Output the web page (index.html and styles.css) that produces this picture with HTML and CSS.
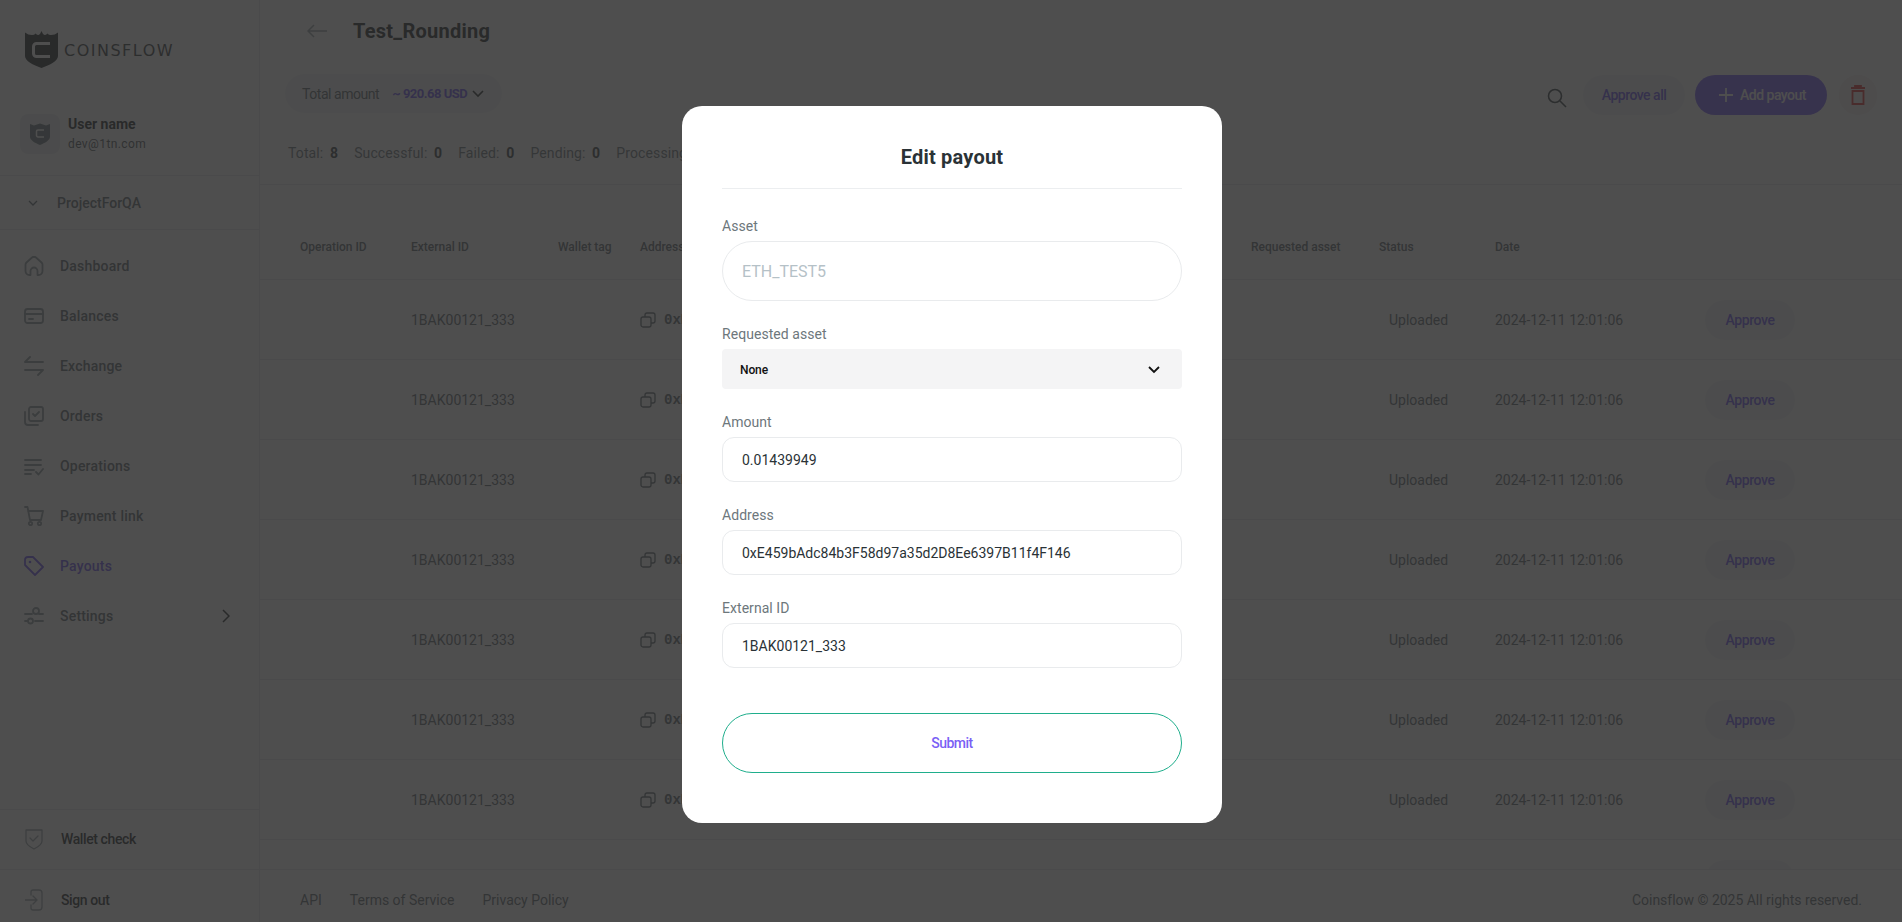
FILE: index.html
```html
<!DOCTYPE html>
<html lang="en">
<head>
<meta charset="utf-8">
<title>Coinsflow - Test_Rounding</title>
<link rel="stylesheet" href="styles.css">
</head>
<body>
<div class="app">
  <aside class="sidebar">
    <div class="logo">
      <svg class="logo-mark" viewBox="0 0 33 37"><path fill="#24292c" d="M0 1.500Q3 4 7 4q2.500 0 3.500-1.500Q12 4 13.500 4 15.500 3 16.500 0q1 3 3 4 1.500 0 3-1.500Q23.500 4 26 4q4 0 7-2.500V25c0 5-8 9-16.500 12C8 34 0 30 0 25z"/><path fill="none" stroke="#fff" stroke-width="3" d="M25 12.500H11.500a3 3 0 0 0-3 3v7a3 3 0 0 0 3 3H25"/></svg>
      <span class="logo-text">COINSFLOW</span>
    </div>
    <div class="user">
      <div class="avatar"><svg viewBox="0 0 20 22"><path fill="#6d7a80" d="M0 1l4 1.500 6-2 6 2 4-1.500v13c0 3-5 6-10 8C5 20 0 17 0 14z"/><path fill="none" stroke="#fff" stroke-width="1.500" d="M14 7H8a1.500 1.500 0 0 0-1.500 1.500v4A1.500 1.500 0 0 0 8 14h6"/></svg></div>
      <div class="user-info"><div class="user-name">User name</div><div class="user-mail">dev@1tn.com</div></div>
    </div>
    <div class="project"><svg class="project-chev" viewBox="0 0 10 6"><path d="M1 1l4 4 4-4"/></svg><span>ProjectForQA</span></div>
    <nav class="nav">
      <a class="nav-item"><svg viewBox="0 0 20 20"><path d="M1.500 8.500q0-1 1-2L8 1.500q2-1.500 4 0l5.500 5q1 1 1 2V15a4 4 0 0 1-4 4h-1v-4a3.500 3.500 0 0 0-7 0v4h-1a4 4 0 0 1-4-4z"/></svg>Dashboard</a>
      <a class="nav-item"><svg viewBox="0 0 20 20"><rect x="1" y="3" width="18" height="14" rx="2.500"/><path d="M1 8h18M5 13h4"/></svg>Balances</a>
      <a class="nav-item"><svg viewBox="0 0 20 20"><path d="M6 1L1 6h18M14 19l5-5H1"/></svg>Exchange</a>
      <a class="nav-item"><svg viewBox="0 0 20 20"><rect x="5" y="1" width="14" height="14" rx="2"/><path d="M1 6v10a3 3 0 0 0 3 3h10M9 8l2 2 4-4"/></svg>Orders</a>
      <a class="nav-item"><svg viewBox="0 0 20 20"><path d="M1 4h16M1 9h16M1 14h9M1 18h6M12 16l2.500 2.500L19 13"/></svg>Operations</a>
      <a class="nav-item"><svg viewBox="0 0 20 20"><path d="M1 1h2.500L6 14h11l2-9H4"/><circle cx="6.500" cy="17.500" r="1.700"/><circle cx="15.500" cy="17.500" r="1.700"/></svg>Payment link</a>
      <a class="nav-item is-active"><svg viewBox="0 0 20 20"><path d="M1 4a3 3 0 0 1 3-3h5l10 10-8 8L1 9z"/><circle class="dot" cx="6" cy="6" r="1.300"/></svg>Payouts</a>
      <a class="nav-item has-more"><svg viewBox="0 0 20 20"><path d="M1 8h7M15 8h4M1 15h3M11 15h8"/><circle cx="12" cy="5" r="3"/><circle cx="6.500" cy="15" r="2.500"/></svg>Settings<svg class="more" viewBox="0 0 8 14"><path d="M1 1l6 6-6 6"/></svg></a>
    </nav>
    <a class="side-foot"><svg viewBox="0 0 18 22"><path d="M1 2h16v11c0 3-4 6-8 8-4-2-8-5-8-8z"/><path d="M5 10l3 3 5-5"/></svg>Wallet check</a>
    <a class="side-foot side-foot-last"><svg viewBox="0 0 18 22"><path d="M6 6V3a2 2 0 0 1 2-2h6a3 3 0 0 1 3 3v14a3 3 0 0 1-3 3H8a2 2 0 0 1-2-2v-3M0 11h11M8 7l4 4-4 4"/></svg>Sign out</a>
  </aside>

  <main class="main">
    <header class="head">
      <svg class="back" viewBox="0 0 20 14"><path d="M20 7H1M7 1L1 7l6 6"/></svg>
      <h1 class="title">Test_Rounding</h1>
    </header>
    <div class="toolbar">
      <div class="total"><span class="total-label">Total amount</span><span class="total-value">~ 920.68 USD</span><svg viewBox="0 0 12 8"><path d="M1 1l5 5 5-5"/></svg></div>
      <div class="actions">
        <svg class="search" viewBox="0 0 20 20"><circle cx="8" cy="8" r="6.500"/><path d="M13 13l6 6"/></svg>
        <button class="btn btn-soft">Approve all</button>
        <button class="btn btn-primary"><svg viewBox="0 0 16 16"><path d="M8 1v14M1 8h14"/></svg>Add payout</button>
        <button class="btn-trash"><svg viewBox="0 0 14 20"><path d="M0 3h14M4 3V1h6v2M1.500 6h11v13h-11z"/></svg></button>
      </div>
    </div>
    <div class="counters">
      <span class="counter">Total: <b>8</b></span>
      <span class="counter">Successful: <b>0</b></span>
      <span class="counter">Failed: <b>0</b></span>
      <span class="counter">Pending: <b>0</b></span>
      <span class="counter">Processing: <b>0</b></span>
    </div>
    <section class="table">
      <div class="row row-head">
        <span>Operation ID</span><span>External ID</span><span>Wallet tag</span><span>Address</span><span>Requested asset</span><span>Status</span><span>Date</span><span></span>
      </div>
      <div class="row"><span></span><span class="cell-id">1BAK00121_333</span><span></span><span class="cell-addr"><svg viewBox="0 0 16 16"><rect x="1" y="5" width="10" height="10" rx="2"/><path d="M5 5V3a2 2 0 0 1 2-2h6a2 2 0 0 1 2 2v6a2 2 0 0 1-2 2h-2"/></svg>0xE459bAdc84b3F58d97a35d2D8Ee6397B11f4F146</span><span></span><span class="cell-status">Uploaded</span><span>2024-12-11 12:01:06</span><span class="cell-act"><button class="btn-approve">Approve</button></span></div>
      <div class="row"><span></span><span class="cell-id">1BAK00121_333</span><span></span><span class="cell-addr"><svg viewBox="0 0 16 16"><rect x="1" y="5" width="10" height="10" rx="2"/><path d="M5 5V3a2 2 0 0 1 2-2h6a2 2 0 0 1 2 2v6a2 2 0 0 1-2 2h-2"/></svg>0xE459bAdc84b3F58d97a35d2D8Ee6397B11f4F146</span><span></span><span class="cell-status">Uploaded</span><span>2024-12-11 12:01:06</span><span class="cell-act"><button class="btn-approve">Approve</button></span></div>
      <div class="row"><span></span><span class="cell-id">1BAK00121_333</span><span></span><span class="cell-addr"><svg viewBox="0 0 16 16"><rect x="1" y="5" width="10" height="10" rx="2"/><path d="M5 5V3a2 2 0 0 1 2-2h6a2 2 0 0 1 2 2v6a2 2 0 0 1-2 2h-2"/></svg>0xE459bAdc84b3F58d97a35d2D8Ee6397B11f4F146</span><span></span><span class="cell-status">Uploaded</span><span>2024-12-11 12:01:06</span><span class="cell-act"><button class="btn-approve">Approve</button></span></div>
      <div class="row"><span></span><span class="cell-id">1BAK00121_333</span><span></span><span class="cell-addr"><svg viewBox="0 0 16 16"><rect x="1" y="5" width="10" height="10" rx="2"/><path d="M5 5V3a2 2 0 0 1 2-2h6a2 2 0 0 1 2 2v6a2 2 0 0 1-2 2h-2"/></svg>0xE459bAdc84b3F58d97a35d2D8Ee6397B11f4F146</span><span></span><span class="cell-status">Uploaded</span><span>2024-12-11 12:01:06</span><span class="cell-act"><button class="btn-approve">Approve</button></span></div>
      <div class="row"><span></span><span class="cell-id">1BAK00121_333</span><span></span><span class="cell-addr"><svg viewBox="0 0 16 16"><rect x="1" y="5" width="10" height="10" rx="2"/><path d="M5 5V3a2 2 0 0 1 2-2h6a2 2 0 0 1 2 2v6a2 2 0 0 1-2 2h-2"/></svg>0xE459bAdc84b3F58d97a35d2D8Ee6397B11f4F146</span><span></span><span class="cell-status">Uploaded</span><span>2024-12-11 12:01:06</span><span class="cell-act"><button class="btn-approve">Approve</button></span></div>
      <div class="row"><span></span><span class="cell-id">1BAK00121_333</span><span></span><span class="cell-addr"><svg viewBox="0 0 16 16"><rect x="1" y="5" width="10" height="10" rx="2"/><path d="M5 5V3a2 2 0 0 1 2-2h6a2 2 0 0 1 2 2v6a2 2 0 0 1-2 2h-2"/></svg>0xE459bAdc84b3F58d97a35d2D8Ee6397B11f4F146</span><span></span><span class="cell-status">Uploaded</span><span>2024-12-11 12:01:06</span><span class="cell-act"><button class="btn-approve">Approve</button></span></div>
      <div class="row"><span></span><span class="cell-id">1BAK00121_333</span><span></span><span class="cell-addr"><svg viewBox="0 0 16 16"><rect x="1" y="5" width="10" height="10" rx="2"/><path d="M5 5V3a2 2 0 0 1 2-2h6a2 2 0 0 1 2 2v6a2 2 0 0 1-2 2h-2"/></svg>0xE459bAdc84b3F58d97a35d2D8Ee6397B11f4F146</span><span></span><span class="cell-status">Uploaded</span><span>2024-12-11 12:01:06</span><span class="cell-act"><button class="btn-approve">Approve</button></span></div>
      <div class="row"><span></span><span class="cell-id">1BAK00121_333</span><span></span><span class="cell-addr"><svg viewBox="0 0 16 16"><rect x="1" y="5" width="10" height="10" rx="2"/><path d="M5 5V3a2 2 0 0 1 2-2h6a2 2 0 0 1 2 2v6a2 2 0 0 1-2 2h-2"/></svg>0xE459bAdc84b3F58d97a35d2D8Ee6397B11f4F146</span><span></span><span class="cell-status">Uploaded</span><span>2024-12-11 12:01:06</span><span class="cell-act"><button class="btn-approve">Approve</button></span></div>
    </section>
    <footer class="foot">
      <a>API</a><a>Terms of Service</a><a>Privacy Policy</a>
      <span class="copy">Coinsflow © 2025 All rights reserved.</span>
    </footer>
  </main>
</div>

<div class="overlay">
  <form class="modal">
    <h2 class="modal-title">Edit payout</h2>
    <label class="label label-first">Asset</label>
    <div class="input input-asset">ETH_TEST5</div>
    <label class="label">Requested asset</label>
    <div class="select"><span>None</span><svg viewBox="0 0 12 8"><path d="M1 1l5 5 5-5"/></svg></div>
    <label class="label">Amount</label>
    <div class="input">0.01439949</div>
    <label class="label">Address</label>
    <div class="input">0xE459bAdc84b3F58d97a35d2D8Ee6397B11f4F146</div>
    <label class="label">External ID</label>
    <div class="input">1BAK00121_333</div>
    <button class="submit" type="button">Submit</button>
  </form>
</div>
</body>
</html>
```
FILE: styles.css
```css
* { box-sizing: border-box; }
html, body { margin: 0; height: 922px; overflow: hidden; }
body { font-family: Roboto, "Liberation Sans", sans-serif; font-size: 14px; color: #5f6a70; background: #fff; }
a { display: flex; text-decoration: none; }
button { font-family: inherit; border: 0; padding: 0; }

.app { display: flex; height: 922px; }

.sidebar { width: 260px; flex: none; display: flex; flex-direction: column; border-right: 1px solid #e6e8ea; }
.logo { height: 114px; padding: 31px 0 0 25px; display: flex; align-items: flex-start; gap: 6px; }
.logo-mark { width: 33px; height: 37px; flex: none; }
.logo-text { font-family: "DejaVu Sans", sans-serif; font-size: 16px; line-height: 39px; letter-spacing: 1.500px; color: #3a4044; }
.user { height: 61px; padding: 0 20px; display: flex; gap: 8px; }
.avatar { width: 40px; height: 40px; border-radius: 8px; background: #eceef0; display: flex; align-items: center; justify-content: center; }
.avatar svg { width: 20px; height: 22px; }
.user-name { font-size: 14px; line-height: 20px; font-weight: 700; color: #24292c; }
.user-mail { font-size: 12px; line-height: 20px; letter-spacing: .4px; color: #4f575c; }
.project { height: 55px; border-top: 1px solid #e6e8ea; border-bottom: 1px solid #e6e8ea; display: flex; align-items: center; padding-left: 28px; gap: 19px; font-weight: 500; color: #5f6a70; }
.project-chev { width: 10px; height: 6px; fill: none; stroke: #5f6a70; stroke-width: 1.300; }
.nav { padding-top: 11px; flex: 1; }
.nav-item { height: 50px; align-items: center; padding-left: 24px; gap: 16px; font-weight: 500; letter-spacing: .2px; color: #5f6a70; }
.nav-item > svg:first-child { width: 20px; height: 20px; flex: none; fill: none; stroke: #8d989e; stroke-width: 1.800; stroke-linecap: round; stroke-linejoin: round; }
.nav-item.is-active { color: #6e55f0; }
.nav-item.is-active > svg:first-child { stroke: #6e55f0; stroke-width: 1.800; }
.nav-item .dot { fill: #6e55f0; stroke: none; }
.more { width: 8px; height: 14px; margin-left: auto; margin-right: 29px; fill: none; stroke: #24292c; stroke-width: 1.500; }
.side-foot { height: 60px; border-top: 1px solid #e6e8ea; align-items: center; padding-left: 25px; padding-bottom: 2px; gap: 18px; font-weight: 500; letter-spacing: -.4px; color: #24292c; }
.side-foot-last { height: 53px; padding-top: 7px; padding-bottom: 0; }
.side-foot svg { width: 18px; height: 22px; flex: none; fill: none; stroke: #9aa4a9; stroke-width: 1.300; stroke-linecap: round; stroke-linejoin: round; }

.main { flex: 1; min-width: 0; display: flex; flex-direction: column; height: 922px; }
.head { height: 62px; display: flex; align-items: center; padding-left: 47px; gap: 26px; }
.back { width: 20px; height: 14px; fill: none; stroke: #9aa4a9; stroke-width: 1.500; }
.title { margin: 0; font-size: 20px; line-height: 28px; font-weight: 700; letter-spacing: .25px; color: #24292c; }
.toolbar { height: 53px; padding: 13px 25px 0 25px; display: flex; justify-content: space-between; align-items: flex-start; }
.total { height: 39px; width: 217px; margin-top: -1px; border-radius: 20px; background: #f3f4f5; display: flex; align-items: center; padding-left: 17px; }
.total-label { letter-spacing: -.45px; color: #5f6a70; margin-right: 13px; }
.total-value { font-size: 13px; font-weight: 700; letter-spacing: -.5px; color: #6e55f0; margin-right: 5px; }
.total svg { width: 12px; height: 8px; fill: none; stroke: #24292c; stroke-width: 1.600; }
.actions { display: flex; align-items: center; height: 40px; }
.search { width: 20px; height: 20px; margin-right: 16px; margin-top: 6px; fill: none; stroke: #3a4246; stroke-width: 1.600; }
.btn { height: 40px; border-radius: 20px; font-size: 14px; font-weight: 500; letter-spacing: -.5px; display: flex; align-items: center; justify-content: center; }
.btn-soft { width: 102px; background: #f3f4f7; color: #6e55f0; margin-right: 10px; }
.btn-primary { width: 132px; gap: 6px; padding-left: 2px; background: #7a5ff5; color: #fff; margin-right: 12px; }
.btn-primary svg { width: 16px; height: 16px; fill: none; stroke: #fff; stroke-width: 1.800; }
.btn-trash { width: 38px; height: 40px; border-radius: 19px; background: #f8f1f1; display: flex; align-items: center; justify-content: center; }
.btn-trash svg { width: 14px; height: 20px; fill: none; stroke: #e03a3a; stroke-width: 1.800; }
.counters { height: 70px; border-bottom: 1px solid #e6e8ea; padding: 28px 0 0 28px; display: flex; gap: 16px; line-height: 20px; letter-spacing: .12px; color: #6d777c; }
.counter b { margin-left: 3px; font-weight: 700; color: #3a4246; }

.table { flex: 1; min-height: 0; overflow: hidden; }
.row { display: grid; grid-template-columns: 151px 147px 82px 611px 128px 116px 212px 95px; height: 80px; align-items: center; border-bottom: 1px solid #e6e8ea; color: #5f6a70; }
.row > span:first-child { padding-left: 40px; }
.row-head { height: 95px; padding-top: 29px; font-size: 12px; font-weight: 500; color: #5f6a70; }
.row-head > span { white-space: nowrap; }
.cell-addr { display: flex; align-items: center; gap: 8px; font-family: "Liberation Mono", monospace; font-size: 14px; font-weight: 700; white-space: nowrap; overflow: hidden; }
.cell-addr svg { width: 16px; height: 16px; flex: none; fill: none; stroke: #5f6a70; stroke-width: 1.300; }
.cell-status { padding-left: 10px; }
.cell-act { margin-left: -2px; }
.btn-approve { width: 90px; height: 40px; border-radius: 20px; background: #f3f4f7; color: #6e55f0; font-size: 14px; font-weight: 500; letter-spacing: -.4px; }
.foot { height: 53px; flex: none; border-top: 1px solid #e6e8ea; background: #fff; display: flex; align-items: center; padding: 8px 40px 0; gap: 28px; color: #5f6a70; }
.copy { margin-left: auto; letter-spacing: -.02px; }

.overlay { position: fixed; inset: 0; background: rgba(42, 42, 42, .83); display: flex; justify-content: center; align-items: flex-start; padding: 106px 0 0 2px; }
.modal { width: 540px; height: 717px; background: #fff; border-radius: 20px; padding: 37px 40px 0; }
.modal-title { margin: 0 0 27px; padding-bottom: 17px; border-bottom: 1px solid #eceef0; text-align: center; font-size: 20px; line-height: 28px; font-weight: 700; letter-spacing: .2px; color: #2a3236; }
.label { display: block; font-size: 14px; line-height: 20px; margin: 23px 0 5px; letter-spacing: .05px; color: #6d777c; }
.label-first { margin-top: 0; }
.input { height: 45px; border: 1px solid #e9ebed; border-radius: 12px; padding-left: 19px; display: flex; align-items: center; font-size: 14px; color: #2a3236; }
.input-asset { height: 60px; border-radius: 30px; font-size: 16px; color: #b5c1c7; }
.select { height: 40px; border-radius: 4px; background: #f4f4f5; padding: 2px 22px 0 18px; display: flex; align-items: center; justify-content: space-between; font-size: 12px; font-weight: 500; letter-spacing: -.1px; color: #111; }
.select svg { width: 12px; height: 8px; fill: none; stroke: #111; stroke-width: 1.800; }
.submit { display: block; width: 100%; height: 60px; margin-top: 45px; border: 1px solid #1fae8c; border-radius: 30px; background: #fff; font-size: 14px; font-weight: 500; letter-spacing: -.5px; color: #7a5ff5; }
```
